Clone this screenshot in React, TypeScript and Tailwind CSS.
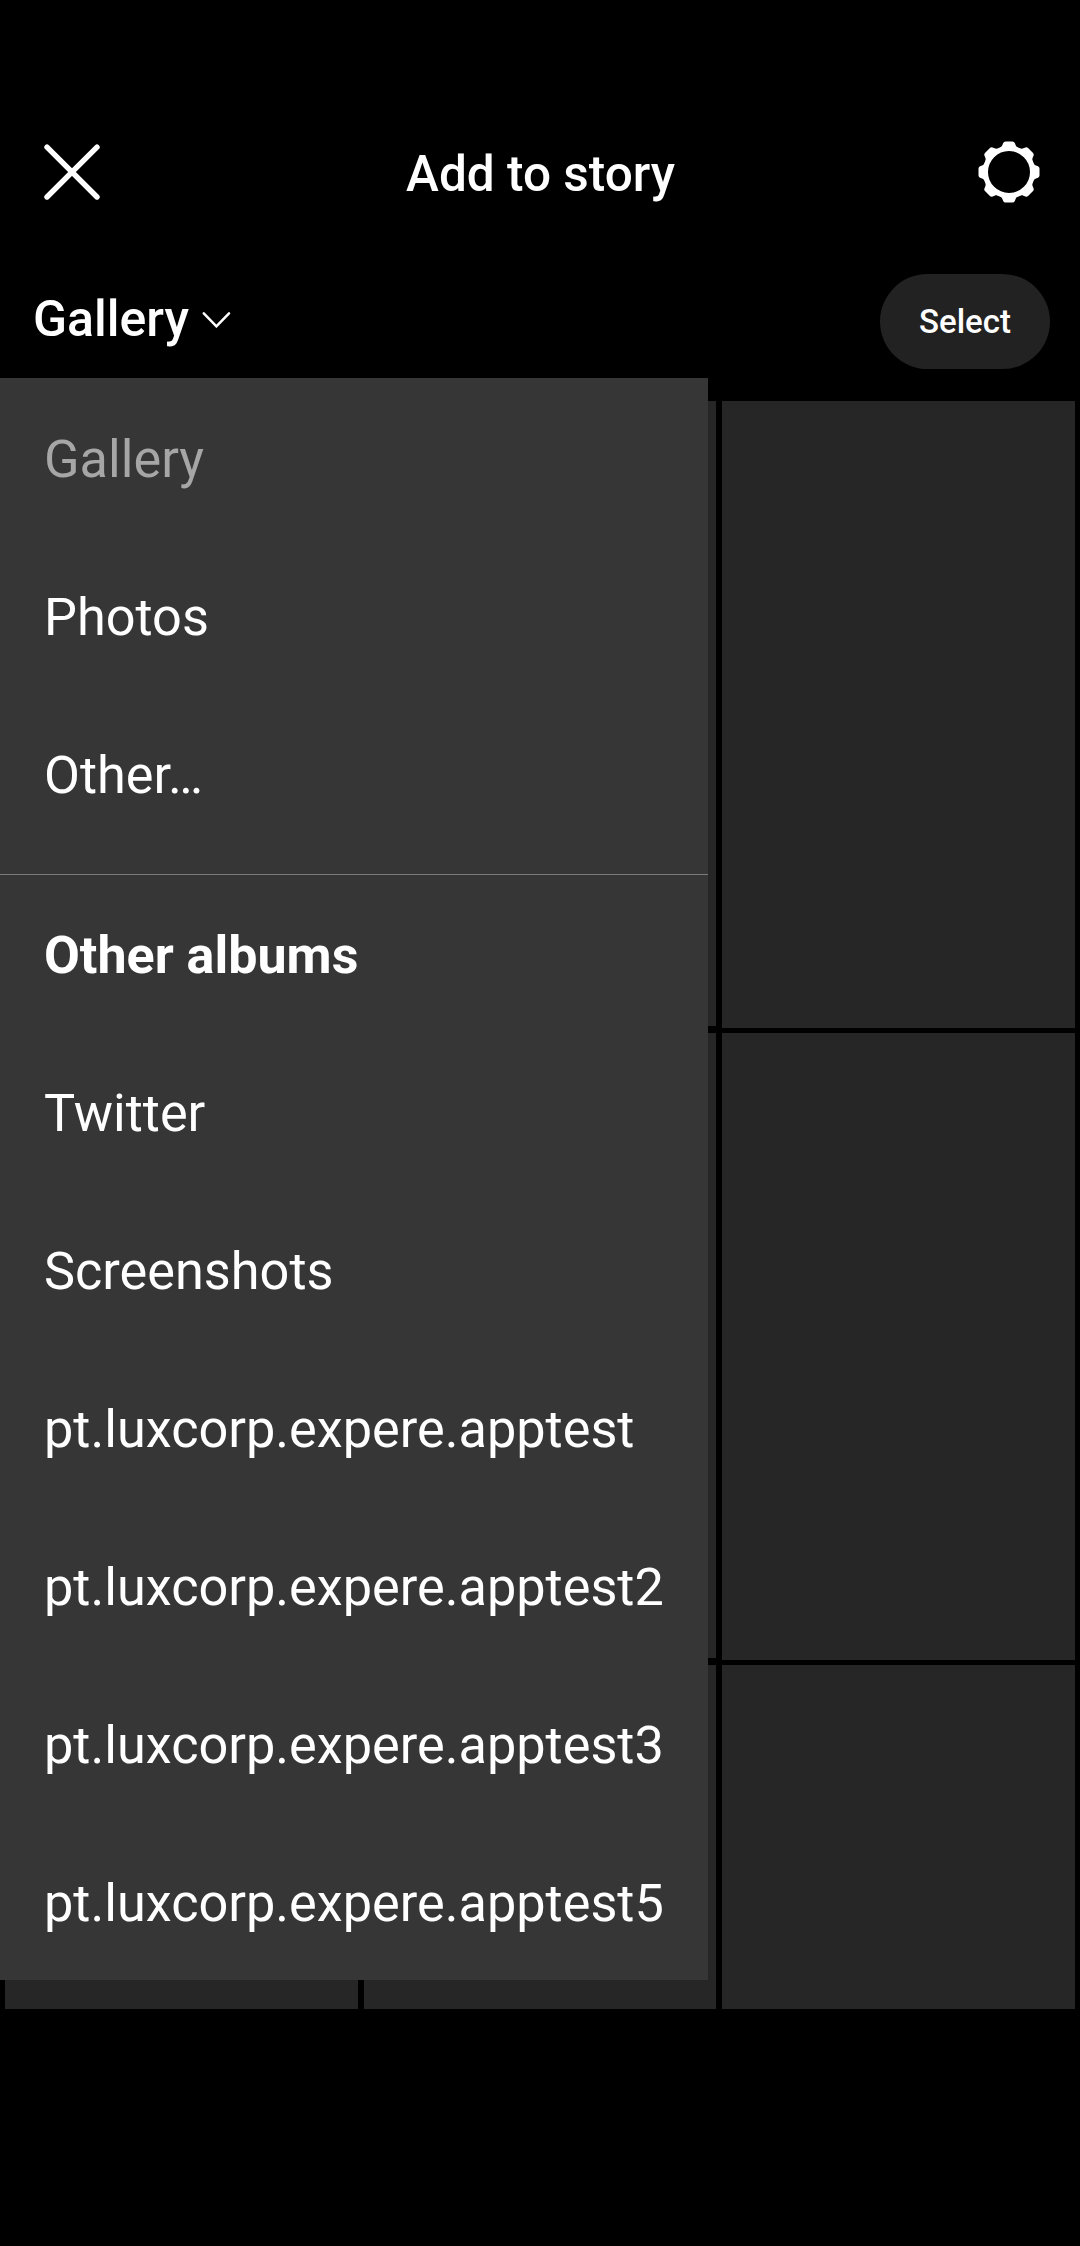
const rows = [
  { row: "h-[632px]", tile: "h-[625px]", last: "h-[627px]" },
  { row: "h-[632px]", tile: "h-[625px]", last: "h-[627px]" },
  { row: "h-[344px]", tile: "h-[344px]", last: "h-[344px]" },
];

const albums = [
  "Twitter",
  "Screenshots",
  "pt.luxcorp.expere.apptest",
  "pt.luxcorp.expere.apptest2",
  "pt.luxcorp.expere.apptest3",
  "pt.luxcorp.expere.apptest5",
];

const gearTeeth = [0, 45, 90, 135, 180, 225, 270, 315];

function CloseIcon() {
  return (
    <svg width="56" height="56" viewBox="0 0 56 56" stroke="#fff" strokeWidth="5.4" strokeLinecap="round">
      <path d="M3 3.2 53 53M53 3.2 3 53" />
    </svg>
  );
}

function GearIcon() {
  return (
    <svg width="62" height="62" viewBox="-31 -31 62 62">
      <circle r="23.5" fill="none" stroke="#fff" strokeWidth="5" />
      {gearTeeth.map((angle) => (
        <path
          key={angle}
          transform={`rotate(${angle})`}
          fill="#fff"
          d="M-10.5-23.700C-8-24.600-7.200-25.600-6.600-27L-5.800-29Q-5.100-30.500-3.500-30.500H3.500Q5.100-30.500 5.800-29L6.600-27C7.200-25.600 8-24.600 10.500-23.700L8-22H-8Z"
        />
      ))}
    </svg>
  );
}

function MenuItem({ label, tone = "text-white" }: { label: string; tone?: string }) {
  return (
    <li className={`flex h-[158px] items-center px-[44px] whitespace-nowrap ${tone}`}>
      <span>{label}</span>
    </li>
  );
}

export default function App() {
  return (
    <main className="relative h-[2246px] w-[1080px] overflow-hidden bg-black font-['Roboto',sans-serif] text-white">
      <header className="flex h-[260px] items-center justify-between pt-[84px] pr-[40px] pl-[44px]">
        <button aria-label="Close"><CloseIcon /></button>
        <h1 className="mt-[4px] ml-[3px] text-[49.5px] leading-[60px] font-medium">Add to story</h1>
        <button aria-label="Settings"><GearIcon /></button>
      </header>

      <div className="flex h-[141px] items-start justify-between pr-[30px] pl-[33px]">
        <button className="mt-[29px] flex items-center text-[50px] leading-[60px] font-medium">
          <span>Gallery</span>
          <svg className="ml-[12px]" width="31" height="18" viewBox="0 0 31 18" fill="none" stroke="#fff" strokeWidth="2.5" strokeLinecap="round">
            <path d="m2.800 3.300 12.600 13L28 3.300" />
          </svg>
        </button>
        <button className="mt-[14px] h-[95px] w-[170px] rounded-[48px] bg-[#222] text-[33px] font-medium">Select</button>
      </div>

      <div className="flex flex-col">
        {rows.map(({ row, tile, last }, i) => (
          <div key={i} className={`flex items-start gap-[6px] px-[5px] ${row}`}>
            <div className={`w-[353px] bg-[#262626] ${tile}`} />
            <div className={`w-[352px] bg-[#262626] ${tile}`} />
            <div className={`w-[353px] bg-[#262626] ${last}`} />
          </div>
        ))}
      </div>

      <nav className="absolute top-[378px] left-0 h-[1602px] w-[708px] bg-[#363636] text-[52.25px] leading-[60px]">
        <ul className="h-[497px] border-b border-[#7a7a7a] pt-[3px]">
          <MenuItem label="Gallery" tone="text-[#a6a6a6]" />
          <MenuItem label="Photos" />
          <MenuItem label="Other…" />
        </ul>
        <ul className="pt-[2px]">
          <MenuItem label="Other albums" tone="text-[52px] font-bold" />
          {albums.map((album) => <MenuItem key={album} label={album} />)}
        </ul>
      </nav>
    </main>
  );
}
